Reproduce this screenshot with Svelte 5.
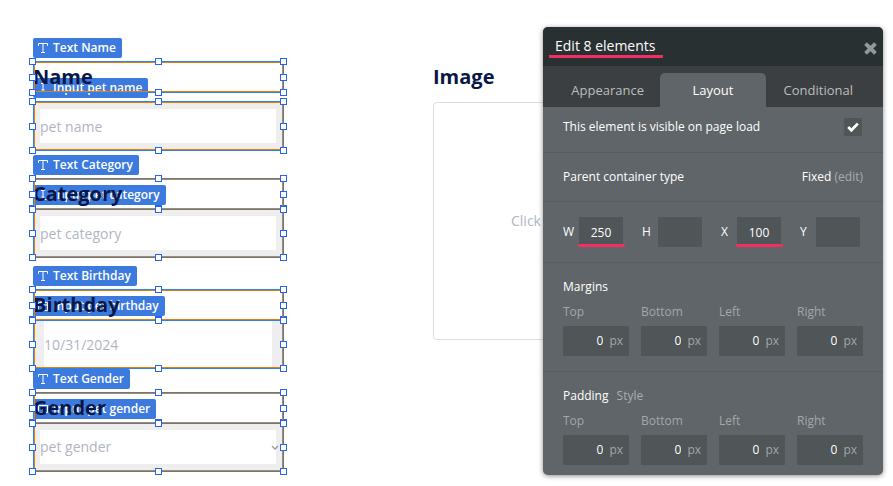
<script>
  const fields = [
    { name: 'Name', kind: 'text', hint: 'pet name', top: 61, inputTop: 101 },
    { name: 'Category', kind: 'text', hint: 'pet category', top: 178, inputTop: 208 },
    { name: 'Birthday', kind: 'date', hint: '10/31/2024', top: 289, inputTop: 319 },
    { name: 'Gender', kind: 'select', hint: 'pet gender', top: 392, inputTop: 422 }
  ];
  const handles = ['nw', 'n', 'ne', 'w', 'e', 'sw', 's', 'se'];
  const tabs = ['Appearance', 'Layout', 'Conditional'];
  let active = $state('Layout');
  let visible = $state(true);
  const dims = [
    { label: 'W', value: '250', marked: true },
    { label: 'H', value: '' },
    { label: 'X', value: '100', marked: true },
    { label: 'Y', value: '' }
  ];
  const sides = ['Top', 'Bottom', 'Left', 'Right'];
</script>

{#snippet selection(top, height)}
  <div class="selection" style:top="{top}px" style:height="{height}px">
    {#each handles as h}<i class="handle {h}"></i>{/each}
  </div>
{/snippet}

{#snippet tag(top, text, kind)}
  <div class="tag" style:top="{top}px">
    <svg width="10" height="10" viewBox="0 0 10 10" fill="none" stroke="currentColor" aria-hidden="true">
      {#if kind === 'title'}
        <path d="M.5 2.8V.5h9v2.3M5 .5v9M3 9.5h4" />
      {:else if kind === 'text'}
        <path d="M3 .5h4M5 .5v7M3.5 7h3M1.5 9.5h2M6.5 9.5h2" />
      {:else if kind === 'date'}
        <path d="M.5 1.5h9v8h-9zM.5 4h9M3 0v2M7 0v2" />
      {:else}
        <path d="M.5 1.5h9v7h-9zM3 4l2 2 2-2" />
      {/if}
    </svg>
    <span>{text}</span>
  </div>
{/snippet}

{#snippet sideInputs(group)}
  <div class="sides">
    {#each sides as side}
      <label class="side">
        <span>{side}</span>
        <span class="unit"><input type="text" value="0" aria-label="{group} {side}" /><span>px</span></span>
      </label>
    {/each}
  </div>
{/snippet}

<main class="canvas">
  {#each fields as f}
    <div class="field {f.kind}" style:top="{f.inputTop}px">
      {#if f.kind === 'select'}
        <select id={f.name}><option>{f.hint}</option></select>
        <svg class="chevron" width="8" height="6" viewBox="0 0 8 6" fill="none" stroke="#999" stroke-width="1.3" aria-hidden="true"><path d="M1 1l3 3 3-3" /></svg>
      {:else}
        <input id={f.name} type="text" placeholder={f.hint} />
      {/if}
    </div>
    {@render tag(f.top - 23, `Text ${f.name}`, 'title')}
    {@render tag(f.inputTop - 23, `Input pet ${f.name.toLowerCase()}`, f.kind)}
    <label class="heading" for={f.name} style:top="{f.top}px">{f.name}</label>
    {@render selection(f.inputTop, 50)}
    {@render selection(f.top, 32)}
  {/each}

  <section class="picture">
    <h2>Image</h2>
    <button class="upload">Click</button>
  </section>

  <aside class="panel">
    <header>
      <h1>Edit 8 elements</h1>
      <button class="close" aria-label="Close">
        <svg width="13" height="13" viewBox="0 0 12 12" stroke="currentColor" stroke-width="3.6" aria-hidden="true"><path d="M1.4 1.4l9.2 9.2M10.6 1.4l-9.2 9.2" /></svg>
      </button>
    </header>
    <div class="tabs" role="tablist">
      {#each tabs as t}
        <button role="tab" aria-selected={active === t} class:active={active === t} onclick={() => (active = t)}>{t}</button>
      {/each}
    </div>
    <div class="row first">
      <label for="visible">This element is visible on page load</label>
      <span class="check">
        <input id="visible" type="checkbox" bind:checked={visible} />
        {#if visible}
          <svg width="12" height="10" viewBox="0 0 12 10" fill="none" stroke="#fff" stroke-width="2.8" aria-hidden="true"><path d="M1.2 5l3.2 3.2L10.8 1.6" /></svg>
        {/if}
      </span>
    </div>
    <div class="row">
      <span>Parent container type</span>
      <span>Fixed <a href="#edit">(edit)</a></span>
    </div>
    <div class="dims">
      {#each dims as d}
        <label class:marked={d.marked}><span>{d.label}</span><input type="text" value={d.value} /></label>
      {/each}
    </div>
    <section class="group">
      <h3>Margins</h3>
      {@render sideInputs('Margin')}
    </section>
    <section class="group">
      <h3>Padding <a href="#style">Style</a></h3>
      {@render sideInputs('Padding')}
    </section>
  </aside>
</main>

<style>
  :global(body) {
    margin: 0;
    background: #fff;
  }
  .canvas,
  .canvas * {
    box-sizing: border-box;
  }
  .canvas {
    position: relative;
    min-height: 100vh;
    overflow: hidden;
    font: 12px/18px 'Open Sans', 'Noto Sans', sans-serif;
  }
  button,
  input,
  select {
    font: inherit;
    border: 0;
    padding: 0;
    margin: 0;
    outline: 0;
    border-radius: 0;
    background: none;
    color: inherit;
  }
  a {
    color: #aaadaf;
    text-decoration: none;
  }
  h1,
  h2,
  h3 {
    margin: 0;
    font-weight: 400;
  }

  .field {
    position: absolute;
    left: 33px;
    width: 251px;
    height: 50px;
    padding: 8px 8px 8px 7px;
    background: #eee;
  }
  .field.date {
    padding: 1px 12px 1px 11px;
  }
  .field input,
  .field select {
    display: block;
    width: 100%;
    height: 100%;
    background: #fff;
    color: #b1b5c3;
    font-size: 14px;
    appearance: none;
  }
  .field input::placeholder {
    color: #b1b5c3;
    opacity: 1;
  }
  .chevron {
    position: absolute;
    right: 5px;
    top: 23px;
  }
  .tag {
    position: absolute;
    z-index: 1;
    left: 33px;
    height: 20px;
    padding: 0 6px 0 5px;
    display: flex;
    align-items: center;
    gap: 5px;
    border-radius: 2px;
    background: #3c7add;
    color: #fff;
    font-weight: 600;
    white-space: nowrap;
  }
  .heading,
  h2 {
    color: #091747;
    font-size: 20px;
    line-height: 32px;
    font-weight: 700;
  }
  .heading {
    position: absolute;
    z-index: 2;
    left: 33px;
  }
  .selection {
    position: absolute;
    z-index: 3;
    left: 33px;
    width: 251px;
    border: 1px solid #2d84e8;
    box-shadow: inset 0 0 0 1px #e67e0a;
    pointer-events: none;
  }
  .handle {
    position: absolute;
    width: 7px;
    height: 7px;
    border: 1px solid #2463f5;
    background: #fff;
    left: calc(50% - 4px);
    top: calc(50% - 3px);
  }
  .nw, .w, .sw { left: -5px; }
  .ne, .e, .se { left: calc(100% - 3px); }
  .nw, .n, .ne { top: -4px; }
  .sw, .s, .se { top: calc(100% - 3px); }

  .picture {
    margin: 61px 40px 0 433px;
  }
  .upload {
    display: block;
    width: 100%;
    height: 238px;
    margin-top: 9px;
    padding-left: 77px;
    border: 1px solid #dcdde2;
    border-radius: 4px;
    color: #b1b5c3;
    font-size: 14px;
    text-align: left;
  }

  .panel {
    position: absolute;
    z-index: 5;
    top: 27px;
    right: 10px;
    width: 340px;
    padding-bottom: 10px;
    border-radius: 5px;
    overflow: hidden;
    background: #5f6569;
    color: #fff;
    box-shadow: 0 1px 5px rgba(0, 0, 0, 0.45);
  }
  header {
    display: flex;
    align-items: center;
    justify-content: space-between;
    height: 39px;
    padding: 0 6px;
    background: #283031;
  }
  h1 {
    padding: 2px 8px 0 6px;
    border-bottom: 3px solid #f52d66;
    border-radius: 1px;
    font-size: 14px;
    line-height: 18px;
  }
  .close {
    display: flex;
    margin-top: 3px;
    color: #8f999c;
  }
  .tabs {
    display: flex;
    height: 41px;
    padding: 7px 12px 0;
    background: #3b3f41;
  }
  .tabs button {
    flex: 1;
    color: #bcbebf;
    font-size: 13px;
    border-radius: 5px 5px 0 0;
  }
  .tabs .active {
    background: #5f6569;
    color: #fff;
  }
  .row,
  .dims {
    display: flex;
    align-items: center;
    justify-content: space-between;
    height: 49px;
    padding: 0 20px;
    border-bottom: 1px solid #575c5f;
  }
  .first {
    height: 46px;
    padding-bottom: 5px;
    padding-right: 21px;
  }
  .check {
    position: relative;
    width: 18px;
    height: 18px;
  }
  .check input {
    display: block;
    width: 18px;
    height: 18px;
    background: #505557;
    appearance: none;
  }
  .check svg {
    position: absolute;
    left: 3px;
    top: 4px;
    pointer-events: none;
  }
  .dims {
    height: 61px;
    padding-right: 23px;
  }
  .dims label {
    display: flex;
    align-items: center;
    justify-content: space-between;
    width: 60px;
  }
  .dims input {
    width: 44px;
    height: 30px;
    border-radius: 1px;
    background: #505557;
    text-align: center;
  }
  .marked {
    position: relative;
  }
  .marked::after {
    content: '';
    position: absolute;
    left: 15px;
    right: -2px;
    bottom: 0;
    height: 3px;
    border-radius: 2px;
    background: #f52d66;
  }
  .group {
    padding: 15px 20px 0;
  }
  .group + .group {
    margin-top: 15px;
    border-top: 1px solid #575c5f;
  }
  h3 {
    font-size: 12px;
  }
  h3 a {
    margin-left: 5px;
  }
  .sides {
    display: flex;
    gap: 12px;
    margin-top: 7px;
  }
  .side {
    flex: 1;
    min-width: 0;
    color: #a3a7a9;
  }
  .unit {
    display: flex;
    align-items: center;
    gap: 6px;
    height: 30px;
    margin-top: 5px;
    padding-right: 6px;
    border-radius: 1px;
    background: #505557;
  }
  .unit input {
    flex: 1;
    min-width: 0;
    color: #fff;
    text-align: right;
  }
</style>
